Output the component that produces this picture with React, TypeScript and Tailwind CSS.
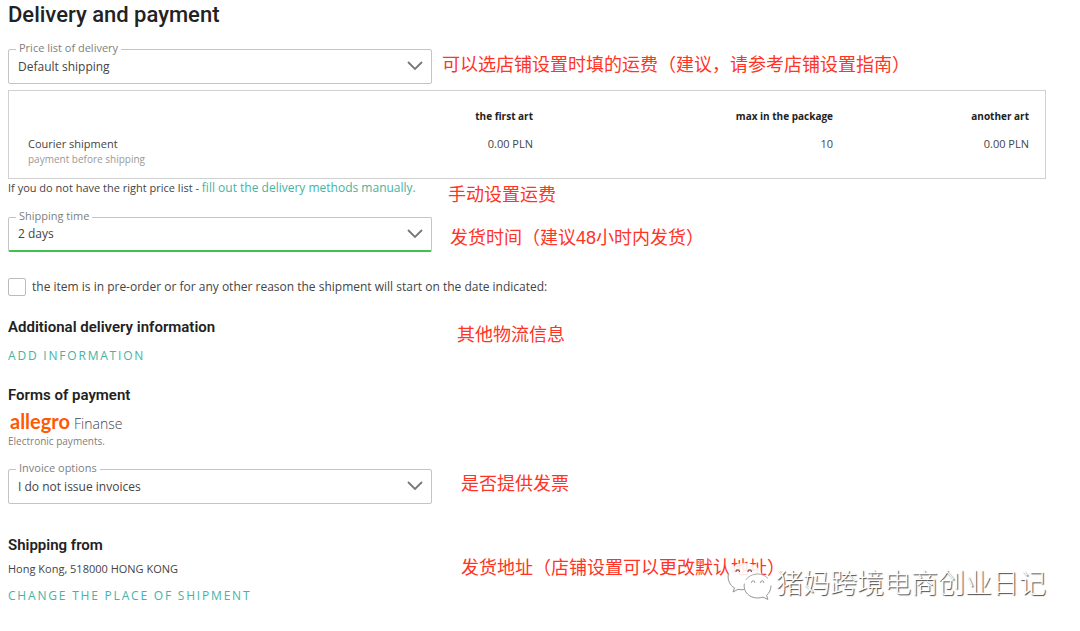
import type { ReactNode } from "react";

function Note({ children, className }: { children: ReactNode; className: string }) {
  return (
    <p
      className={`font-['Liberation_Sans','Noto_Sans_CJK_SC',sans-serif] text-[18px] leading-5 whitespace-nowrap text-[#ff3326] ${className}`}
    >
      {children}
    </p>
  );
}

function Row({ children, className = "" }: { children: ReactNode; className?: string }) {
  return <div className={`grid grid-cols-[minmax(0,424px)_1fr] items-start ${className}`}>{children}</div>;
}

function Field({ id, label, value, valid = false }: { id: string; label: string; value: string; valid?: boolean }) {
  return (
    <div className="relative">
      <label htmlFor={id} className="absolute -top-[9px] left-2 bg-white px-[3px] text-[11px] leading-4 text-[#808080]">
        {label}
      </label>
      <select
        id={id}
        className={`block h-[35px] w-full appearance-none rounded-[2px] border bg-white pr-8 pl-[9px] text-[12px] text-[#444] ${
          valid ? "border-[#c4c4c4] border-b-2 border-b-[#3fc14a]" : "border-[#c4c4c4]"
        }`}
      >
        <option>{value}</option>
      </select>
      <svg
        viewBox="0 0 16 10"
        aria-hidden="true"
        className="pointer-events-none absolute top-3 right-[9px] h-[10px] w-4"
        fill="none"
        stroke="#777"
        strokeWidth="1.8"
      >
        <path d="M1 1l7 7 7-7" />
      </svg>
    </div>
  );
}

function Heading({ children }: { children: ReactNode }) {
  return <h3 className="font-[Roboto,sans-serif] text-[15px] leading-5 font-semibold text-[#222]">{children}</h3>;
}

function ActionLink({ children, className }: { children: ReactNode; className: string }) {
  return (
    <a href="#" className={`block text-[12px] leading-5 tracking-[0.15em] text-[#45b3a3] uppercase ${className}`}>
      {children}
    </a>
  );
}

function Watermark() {
  return (
    <div className="absolute top-[27px] right-0 flex items-center gap-1">
      <svg viewBox="0 0 46 40" aria-hidden="true" className="h-10 w-[46px]" fill="none" strokeLinecap="round">
        <path
          d="M19 1C9.600 1 2 7.300 2 15c0 4.500 2.500 8.500 6.500 11l-1.500 4.500 5.500-3c2 .9 4.200 1.300 6.500 1.300 9.400 0 17-6.200 17-13.800S28.400 1 19 1z"
          fill="#fff"
          fillOpacity="0.88"
        />
        <path d="M2.300 12C1.200 18 4 23.500 8.500 26l-1.500 4 5-2.700c2 .5 4 .6 6 .3" stroke="#888" strokeWidth="0.9" />
        <path
          d="M31.500 12C24 12 18 17.400 18 24s6 12 13.500 12c1.900 0 3.700-.3 5.400-.9l5 2.300-1.300-4.200c2.800-2.200 4.400-5.500 4.400-9.200C45 17.400 39 12 31.500 12z"
          fill="#fff"
        />
        <path
          d="M20 17.500C22 14.500 26.500 12 31.500 12c4 0 7.800 1.500 10.300 4.200"
          stroke="#999"
          strokeWidth="0.8"
        />
        <path
          d="M18.200 22C17 30 23.500 36 31.500 36c1.900 0 3.700-.3 5.400-.9l5 2.300-1.300-4.200c2.800-2.200 4.400-5.500 4.400-9.200"
          stroke="#888"
          strokeWidth="0.9"
        />
        <path d="M10 9.500a1.700 1.700 0 0 1 3.400 0M22 9.500a1.700 1.700 0 0 1 3.400 0" stroke="#844" strokeWidth="1.2" />
        <path d="M25.500 20.500a1.700 1.700 0 0 1 3.400 0M34.500 20.500a1.700 1.700 0 0 1 3.400 0" stroke="#888" strokeWidth="0.9" />
      </svg>
      <span className="font-['Noto_Sans_CJK_SC',sans-serif] text-[27px] leading-10 font-light whitespace-nowrap text-white [text-shadow:1px_1px_1px_#444]">
        猪妈跨境电商创业日记
      </span>
    </div>
  );
}

export default function App() {
  return (
    <main className="bg-white pt-px pr-[34px] pb-6 pl-2 font-['Open_Sans',sans-serif] text-[#444]">
      <h2 className="font-[Roboto,sans-serif] text-[22px] leading-7 font-medium text-[#222]">Delivery and payment</h2>

      <Row className="mt-5">
        <Field id="price-list" label="Price list of delivery" value="Default shipping" />
        <Note className="mt-[6px] ml-[10px]">可以选店铺设置时填的运费（建议，请参考店铺设置指南）</Note>
      </Row>

      <div className="mt-[6px] border border-[#d0d0d0] px-4 pt-[15px] pb-3">
        <table className="w-full table-fixed text-right text-[11px]">
          <colgroup>
            <col className="w-[30%]" />
            <col />
            <col className="w-[300px]" />
            <col className="w-[196px]" />
          </colgroup>
          <thead>
            <tr className="text-[10px] leading-5 text-[#222]">
              <td />
              <th scope="col" className="font-bold">the first art</th>
              <th scope="col" className="font-bold">max in the package</th>
              <th scope="col" className="font-bold">another art</th>
            </tr>
          </thead>
          <tbody>
            <tr className="align-top leading-4">
              <th scope="row" className="pt-[10px] pl-[3px] text-left font-normal">
                Courier shipment
                <span className="block text-[10px] leading-[14px] text-[#999]">payment before shipping</span>
              </th>
              <td className="pt-[10px]">0.00 PLN</td>
              <td className="pt-[10px]">10</td>
              <td className="pt-[10px]">0.00 PLN</td>
            </tr>
          </tbody>
        </table>
      </div>

      <Row>
        <p className="text-[11px] leading-[18px] whitespace-nowrap">
          If you do not have the right price list -{" "}
          <a href="#" className="text-[12px] text-[#45b3a3]">fill out the delivery methods manually.</a>
        </p>
        <Note className="mt-[6px] ml-4">手动设置运费</Note>
      </Row>

      <Row className="mt-3">
        <Field id="shipping-time" label="Shipping time" value="2 days" valid />
        <Note className="mt-[11px] ml-[18px]">发货时间（建议48小时内发货）</Note>
      </Row>

      <label className="mt-[25px] flex items-center gap-[6px] text-[12px] leading-5">
        <input type="checkbox" className="size-[18px] appearance-none rounded-[2px] border border-[#bbb] bg-white" />
        the item is in pre-order or for any other reason the shipment will start on the date indicated:
      </label>

      <Row className="mt-5">
        <section>
          <Heading>Additional delivery information</Heading>
          <ActionLink className="mt-[9px]">Add information</ActionLink>
        </section>
        <Note className="mt-2 ml-[25px]">其他物流信息</Note>
      </Row>

      <section className="mt-[19px]">
        <Heading>Forms of payment</Heading>
        <p className="mt-[6px] flex items-baseline gap-1 pl-[2px] leading-5">
          <span className="font-[Lato,sans-serif] text-[20px] font-bold text-[#ff5a00]">allegro</span>
          <span className="text-[14px] font-light text-[#444]">Finanse</span>
        </p>
        <p className="text-[10px] leading-[14px] text-[#808080]">Electronic payments.</p>
      </section>

      <Row className="mt-[21px]">
        <Field id="invoice" label="Invoice options" value="I do not issue invoices" />
        <Note className="mt-[5px] ml-[29px]">是否提供发票</Note>
      </Row>

      <div className="relative mt-[31px]">
        <Row>
          <section>
            <Heading>Shipping from</Heading>
            <p className="mt-1 text-[11px] leading-5">Hong Kong, 518000 HONG KONG</p>
            <ActionLink className="mt-[7px]">Change the place of shipment</ActionLink>
          </section>
          <Note className="mt-[23px] ml-[29px]">发货地址（店铺设置可以更改默认地址）</Note>
        </Row>
        <Watermark />
      </div>
    </main>
  );
}
